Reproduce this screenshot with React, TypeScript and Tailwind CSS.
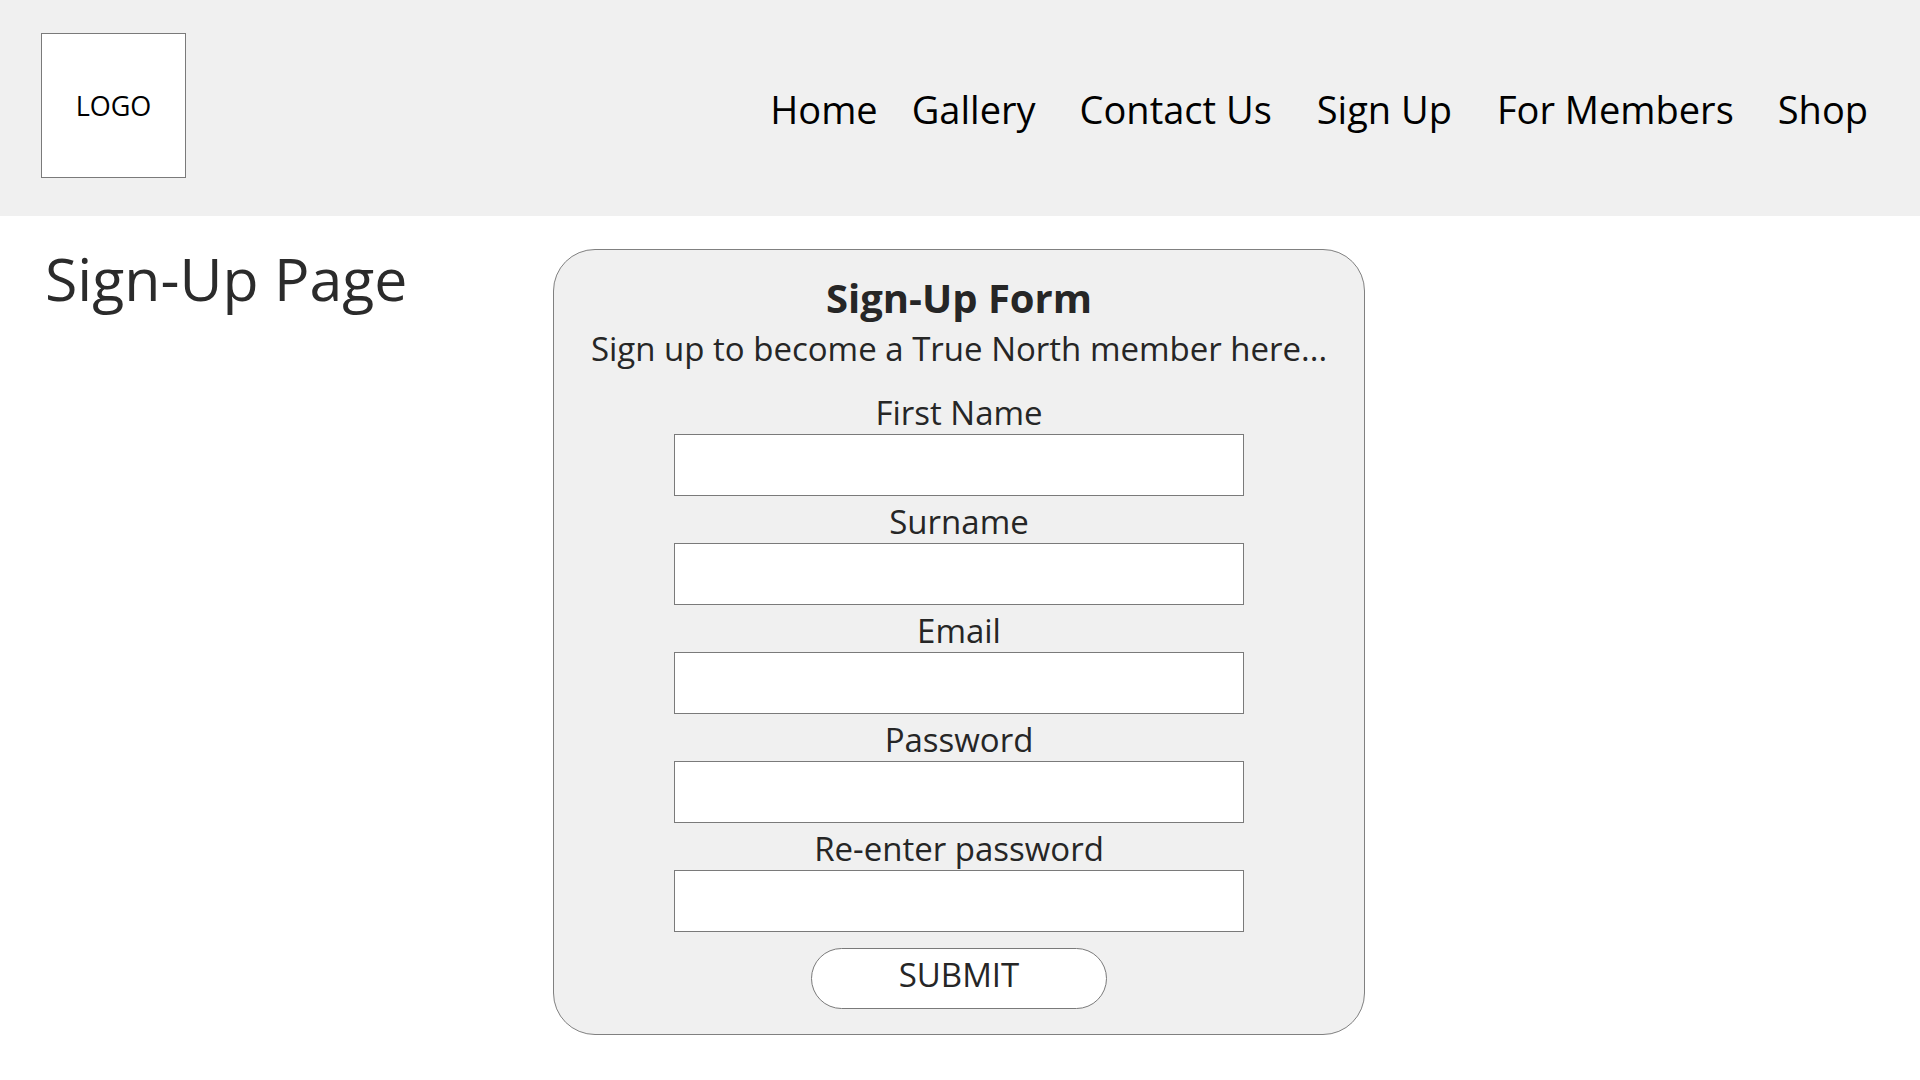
import React from "react";

const navItems = [
  { label: "Home", gap: "ml-0" },
  { label: "Gallery", gap: "ml-[34px]" },
  { label: "Contact Us", gap: "ml-[44px]" },
  { label: "Sign Up", gap: "ml-[45px]" },
  { label: "For Members", gap: "ml-[45px]" },
  { label: "Shop", gap: "ml-[44px]" },
];

const fields = ["First Name", "Surname", "Email", "Password", "Re-enter password"];

const Header: React.FC = () => (
  <header className="flex h-[216px] items-start bg-[#f0f0f0] pl-[41px] pr-[52px] pt-[33px]">
    <div className="flex h-[145px] w-[145px] items-center justify-center border border-[#7a7a7a] bg-white">
      <span className="text-[27px] leading-none text-black">LOGO</span>
    </div>
    <nav className="ml-auto mt-[57px] flex">
      {navItems.map((item) => (
        <a key={item.label} href="#" className={`${item.gap} text-[38px] leading-none text-black`}>
          {item.label}
        </a>
      ))}
    </nav>
  </header>
);

const SignUpForm: React.FC = () => (
  <form
    className="flex h-[786px] w-[812px] flex-col items-center rounded-[42px] border border-[#808080] bg-[#f0f0f0] pt-[28px]"
    onSubmit={(e) => e.preventDefault()}
  >
    <h2 className="text-[40px] font-bold leading-[40px] text-[#262626]">Sign-Up Form</h2>
    <p className="mt-[14px] text-[33px] leading-[33px] text-[#262626]">
      Sign up to become a True North member here...
    </p>
    <div className="mt-[22px] flex flex-col items-center">
      {fields.map((f) => (
        <label key={f} className="flex flex-col items-center">
          <span className="pt-[5px] text-[33px] leading-[42px] text-[#262626]">{f}</span>
          <input
            type={f.toLowerCase().includes("password") ? "password" : "text"}
            className="h-[62px] w-[570px] border border-[#7a7a7a] bg-white outline-none"
          />
        </label>
      ))}
    </div>
    <button
      type="submit"
      className="mt-[16px] h-[61px] w-[296px] rounded-full border border-[#7a7a7a] bg-white pb-[9px] text-[33px] leading-none text-[#262626]"
    >
      SUBMIT
    </button>
  </form>
);

const App: React.FC = () => {
  return (
    <div className="min-h-screen bg-white font-['Open_Sans',sans-serif]">
      <Header />
      <main className="flex pl-[45px] pt-[33px]">
        <div className="w-[508px]">
          <h1 className="text-[59px] leading-[58px] text-[#2b2b2b]">Sign-Up Page</h1>
        </div>
        <SignUpForm />
      </main>
    </div>
  );
};

export default App;
